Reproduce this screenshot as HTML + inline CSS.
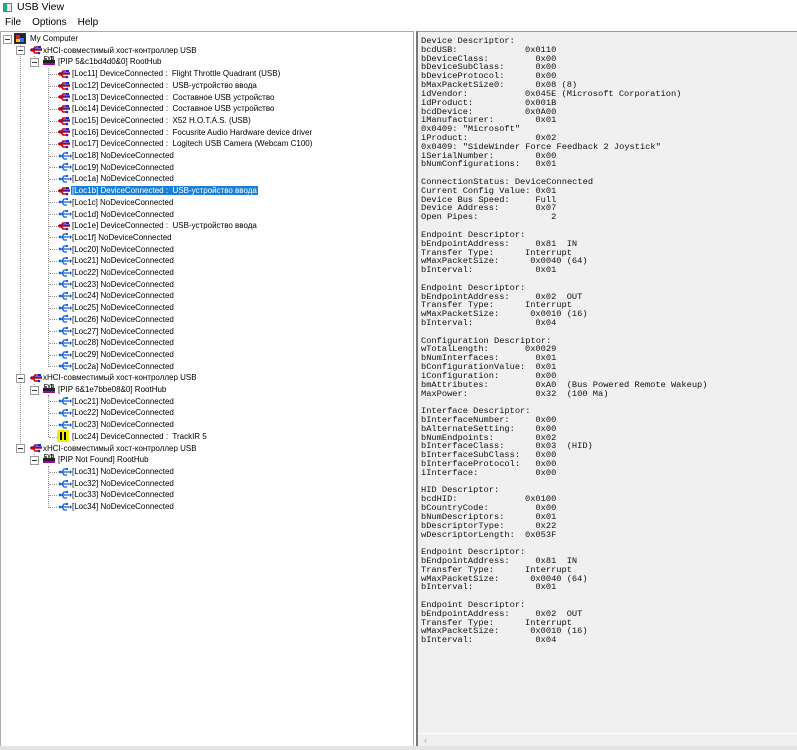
<!DOCTYPE html>
<html><head><meta charset="utf-8"><style>
*{margin:0;padding:0;box-sizing:border-box}
body{width:797px;height:750px;background:#fff;position:relative;overflow:hidden;font-family:"Liberation Sans","Noto Sans CJK SC",sans-serif;color:#000}
#title{position:absolute;left:17px;top:1px;font-size:10.5px}
#ticon{position:absolute;left:3px;top:3px;width:9px;height:9px;border:1px solid #777;background:linear-gradient(90deg,#2a8 0 40%,#eee 40%)}
#menu{position:absolute;top:17px;left:5px;font-size:10px}
#menu span{margin-right:11px}
#tree{position:absolute;left:0;top:31px;width:414px;height:716px;border:1px solid #aaa;background:#fff}
#right{position:absolute;left:416px;top:31px;width:381px;height:716px;border-left:2px solid #777;border-top:1px solid #999;background:#f0f0f0}
#bottom{position:absolute;left:0;top:746px;width:797px;height:4px;background:#e4e4e4}
.r{position:absolute;height:12px;line-height:12px;font-size:8px;white-space:nowrap}
.sel{background:#1a7fd9;color:#fff;padding:0 1px;margin-left:-1px}
.ic{position:absolute}
.ex{position:absolute;width:9px;height:9px;border:1px solid #999;background:#fff}
.ex:after{content:"";position:absolute;left:1px;top:3px;width:5px;height:1px;background:#333}
.vl{position:absolute;width:0;border-left:1px dotted #999}
.hl{position:absolute;height:0;border-top:1px dotted #999}
.t{position:absolute;font-family:"Liberation Mono",monospace;font-size:8.7px;line-height:8.82px;color:#111;white-space:pre}
#hs{position:absolute;left:0;bottom:0;width:379px;height:14px;border-top:1px solid #fff;background:#f0f0f0;font-size:9px;color:#999;padding-left:6px;line-height:13px}
</style></head><body>
<svg width="0" height="0" style="position:absolute"><defs>
<g id="uc"><path d="M0 4h12M3 4l2-3h3M3 4l2 3h3" stroke="#c00" stroke-width="1.6" fill="none"/><path d="M1 3h11" stroke="#22c" stroke-width="1.4"/><circle cx="2" cy="4" r="1.6" fill="#c00"/><rect x="8" y="0" width="3" height="2" fill="#22c"/><circle cx="9" cy="7" r="1.3" fill="#22c"/></g>
<g id="un"><path d="M1 4h11M4 4l2-3h3M4 4l2 3h3" stroke="#1560d6" stroke-width="1.3" fill="none"/><circle cx="2" cy="4" r="1.4" fill="#1560d6"/><path d="M12 2v4l2-2z" fill="#1560d6"/><rect x="8" y="0" width="2" height="2" fill="#1560d6"/></g>
<g id="hub"><rect x="0" y="5" width="12" height="4" fill="#222"/><rect x="0" y="8" width="12" height="2" fill="#a0a"/><text x="1" y="5" font-size="5" font-family="Liberation Sans" font-weight="bold">EVB</text></g>
</defs></svg>
<div id="ticon"></div><div id="title">USB View</div>
<div id="menu"><span>File</span><span>Options</span><span>Help</span></div>
<div id="tree"></div>
<div style="position:absolute;left:0;top:0">
<div class="vl" style="left:20px;top:45px;height:404px"></div>
<div class="vl" style="left:34px;top:56px;height:7px"></div>
<div class="vl" style="left:48px;top:68px;height:299px"></div>
<div class="vl" style="left:34px;top:384px;height:7px"></div>
<div class="vl" style="left:48px;top:395px;height:42px"></div>
<div class="vl" style="left:34px;top:454px;height:7px"></div>
<div class="vl" style="left:48px;top:466px;height:42px"></div>
<div class="ex" style="left:3px;top:35px"></div>
<svg class="ic" style="left:14px;top:33px" width="13" height="12"><rect x="0.5" y="0.5" width="11" height="10" fill="#223" stroke="#333"/><rect x="2" y="2" width="4" height="4" fill="#d22"/><rect x="6" y="5" width="4" height="4" fill="#27e"/><rect x="2" y="6" width="4" height="3" fill="#fc0"/></svg>
<div class="r" style="left:30px;top:33px">My Computer</div>
</div>
<div id="right">
<div class="t" style="left:3px;top:5px">Device Descriptor:
bcdUSB:
bDeviceClass:
bDeviceSubClass:
bDeviceProtocol:
bMaxPacketSize0:
idVendor:
idProduct:
bcdDevice:
iManufacturer:
0x0409: "Microsoft"
iProduct:
0x0409: "SideWinder Force Feedback 2 Joystick"
iSerialNumber:
bNumConfigurations:

ConnectionStatus: DeviceConnected
Current Config Value:
Device Bus Speed:
Device Address:
Open Pipes:

Endpoint Descriptor:
bEndpointAddress:
Transfer Type:
wMaxPacketSize:
bInterval:

Endpoint Descriptor:
bEndpointAddress:
Transfer Type:
wMaxPacketSize:
bInterval:

Configuration Descriptor:
wTotalLength:
bNumInterfaces:
bConfigurationValue:
iConfiguration:
bmAttributes:
MaxPower:

Interface Descriptor:
bInterfaceNumber:
bAlternateSetting:
bNumEndpoints:
bInterfaceClass:
bInterfaceSubClass:
bInterfaceProtocol:
iInterface:

HID Descriptor:
bcdHID:
bCountryCode:
bNumDescriptors:
bDescriptorType:
wDescriptorLength:

Endpoint Descriptor:
bEndpointAddress:
Transfer Type:
wMaxPacketSize:
bInterval:

Endpoint Descriptor:
bEndpointAddress:
Transfer Type:
wMaxPacketSize:
bInterval:</div>
<div class="t" style="left:107px;top:5px">
0x0110
  0x00
  0x00
  0x00
  0x08 (8)
0x045E (Microsoft Corporation)
0x001B
0x0A00
  0x01

  0x02

  0x00
  0x01


  0x01
  Full
  0x07
     2


  0x81  IN
Interrupt
 0x0040 (64)
  0x01


  0x02  OUT
Interrupt
 0x0010 (16)
  0x04


0x0029
  0x01
  0x01
  0x00
  0xA0  (Bus Powered Remote Wakeup)
  0x32  (100 Ma)


  0x00
  0x00
  0x02
  0x03  (HID)
  0x00
  0x00
  0x00


0x0100
  0x00
  0x01
  0x22
0x053F


  0x81  IN
Interrupt
 0x0040 (64)
  0x01


  0x02  OUT
Interrupt
 0x0010 (16)
  0x04</div>
<div id="hs">&#8249;</div>
</div>
<div id="bottom"></div>
<div style="position:absolute;left:0;top:0">
<div class="ex" style="left:16px;top:46px"></div><svg class="ic" style="left:30px;top:46px" width="14" height="9"><use href="#uc"/></svg><div class="r" style="left:43px;top:44.7px">xHCI-совместимый хост-контроллер USB</div>
<div class="ex" style="left:30px;top:58px"></div><svg class="ic" style="left:43px;top:55px" width="13" height="11"><use href="#hub"/></svg><div class="r" style="left:58px;top:56.4px">[PIP 5&amp;c1bd4d0&amp;0] RootHub</div>
<div class="ex" style="left:16px;top:374px"></div><svg class="ic" style="left:30px;top:374px" width="14" height="9"><use href="#uc"/></svg><div class="r" style="left:43px;top:372.3px">xHCI-совместимый хост-контроллер USB</div>
<div class="ex" style="left:30px;top:386px"></div><svg class="ic" style="left:43px;top:383px" width="13" height="11"><use href="#hub"/></svg><div class="r" style="left:58px;top:384px">[PIP 6&amp;1e7bbe08&amp;0] RootHub</div>
<div class="ex" style="left:16px;top:444px"></div><svg class="ic" style="left:30px;top:444px" width="14" height="9"><use href="#uc"/></svg><div class="r" style="left:43px;top:442.5px">xHCI-совместимый хост-контроллер USB</div>
<div class="ex" style="left:30px;top:456px"></div><svg class="ic" style="left:43px;top:453px" width="13" height="11"><use href="#hub"/></svg><div class="r" style="left:58px;top:454.2px">[PIP Not Found] RootHub</div>
</div>
<div style="position:absolute;left:0;top:0">
<div class="hl" style="left:49px;top:74px;width:8px"></div><svg class="ic" style="left:58px;top:70px" width="14" height="9"><use href="#uc"/></svg><div class="r" style="left:72px;top:68.1px">[Loc11] DeviceConnected :&nbsp; Flight Throttle Quadrant (USB)</div>
<div class="hl" style="left:49px;top:86px;width:8px"></div><svg class="ic" style="left:58px;top:82px" width="14" height="9"><use href="#uc"/></svg><div class="r" style="left:72px;top:79.8px">[Loc12] DeviceConnected :&nbsp; USB-устройство ввода</div>
<div class="hl" style="left:49px;top:97px;width:8px"></div><svg class="ic" style="left:58px;top:93px" width="14" height="9"><use href="#uc"/></svg><div class="r" style="left:72px;top:91.5px">[Loc13] DeviceConnected :&nbsp; Составное USB устройство</div>
<div class="hl" style="left:49px;top:109px;width:8px"></div><svg class="ic" style="left:58px;top:105px" width="14" height="9"><use href="#uc"/></svg><div class="r" style="left:72px;top:103.2px">[Loc14] DeviceConnected :&nbsp; Составное USB устройство</div>
<div class="hl" style="left:49px;top:121px;width:8px"></div><svg class="ic" style="left:58px;top:117px" width="14" height="9"><use href="#uc"/></svg><div class="r" style="left:72px;top:114.9px">[Loc15] DeviceConnected :&nbsp; X52 H.O.T.A.S. (USB)</div>
<div class="hl" style="left:49px;top:132px;width:8px"></div><svg class="ic" style="left:58px;top:128px" width="14" height="9"><use href="#uc"/></svg><div class="r" style="left:72px;top:126.6px">[Loc16] DeviceConnected :&nbsp; Focusrite Audio Hardware device driver</div>
<div class="hl" style="left:49px;top:144px;width:8px"></div><svg class="ic" style="left:58px;top:140px" width="14" height="9"><use href="#uc"/></svg><div class="r" style="left:72px;top:138.3px">[Loc17] DeviceConnected :&nbsp; Logitech USB Camera (Webcam C100)</div>
<div class="hl" style="left:49px;top:156px;width:8px"></div><svg class="ic" style="left:58px;top:152px" width="14" height="9"><use href="#un"/></svg><div class="r" style="left:72px;top:150px">[Loc18] NoDeviceConnected</div>
<div class="hl" style="left:49px;top:167px;width:8px"></div><svg class="ic" style="left:58px;top:163px" width="14" height="9"><use href="#un"/></svg><div class="r" style="left:72px;top:161.7px">[Loc19] NoDeviceConnected</div>
<div class="hl" style="left:49px;top:179px;width:8px"></div><svg class="ic" style="left:58px;top:175px" width="14" height="9"><use href="#un"/></svg><div class="r" style="left:72px;top:173.4px">[Loc1a] NoDeviceConnected</div>
<div class="hl" style="left:49px;top:191px;width:8px"></div><svg class="ic" style="left:58px;top:187px" width="14" height="9"><use href="#uc"/></svg><div class="r" style="left:72px;top:185.1px"><span class="sel">[Loc1b] DeviceConnected :&nbsp; USB-устройство ввода</span></div>
<div class="hl" style="left:49px;top:202px;width:8px"></div><svg class="ic" style="left:58px;top:198px" width="14" height="9"><use href="#un"/></svg><div class="r" style="left:72px;top:196.8px">[Loc1c] NoDeviceConnected</div>
<div class="hl" style="left:49px;top:214px;width:8px"></div><svg class="ic" style="left:58px;top:210px" width="14" height="9"><use href="#un"/></svg><div class="r" style="left:72px;top:208.5px">[Loc1d] NoDeviceConnected</div>
<div class="hl" style="left:49px;top:226px;width:8px"></div><svg class="ic" style="left:58px;top:222px" width="14" height="9"><use href="#uc"/></svg><div class="r" style="left:72px;top:220.2px">[Loc1e] DeviceConnected :&nbsp; USB-устройство ввода</div>
<div class="hl" style="left:49px;top:237px;width:8px"></div><svg class="ic" style="left:58px;top:233px" width="14" height="9"><use href="#un"/></svg><div class="r" style="left:72px;top:231.9px">[Loc1f] NoDeviceConnected</div>
<div class="hl" style="left:49px;top:249px;width:8px"></div><svg class="ic" style="left:58px;top:245px" width="14" height="9"><use href="#un"/></svg><div class="r" style="left:72px;top:243.6px">[Loc20] NoDeviceConnected</div>
<div class="hl" style="left:49px;top:261px;width:8px"></div><svg class="ic" style="left:58px;top:257px" width="14" height="9"><use href="#un"/></svg><div class="r" style="left:72px;top:255.3px">[Loc21] NoDeviceConnected</div>
<div class="hl" style="left:49px;top:273px;width:8px"></div><svg class="ic" style="left:58px;top:269px" width="14" height="9"><use href="#un"/></svg><div class="r" style="left:72px;top:267px">[Loc22] NoDeviceConnected</div>
<div class="hl" style="left:49px;top:284px;width:8px"></div><svg class="ic" style="left:58px;top:280px" width="14" height="9"><use href="#un"/></svg><div class="r" style="left:72px;top:278.7px">[Loc23] NoDeviceConnected</div>
<div class="hl" style="left:49px;top:296px;width:8px"></div><svg class="ic" style="left:58px;top:292px" width="14" height="9"><use href="#un"/></svg><div class="r" style="left:72px;top:290.4px">[Loc24] NoDeviceConnected</div>
<div class="hl" style="left:49px;top:308px;width:8px"></div><svg class="ic" style="left:58px;top:304px" width="14" height="9"><use href="#un"/></svg><div class="r" style="left:72px;top:302.1px">[Loc25] NoDeviceConnected</div>
<div class="hl" style="left:49px;top:319px;width:8px"></div><svg class="ic" style="left:58px;top:315px" width="14" height="9"><use href="#un"/></svg><div class="r" style="left:72px;top:313.8px">[Loc26] NoDeviceConnected</div>
<div class="hl" style="left:49px;top:331px;width:8px"></div><svg class="ic" style="left:58px;top:327px" width="14" height="9"><use href="#un"/></svg><div class="r" style="left:72px;top:325.5px">[Loc27] NoDeviceConnected</div>
<div class="hl" style="left:49px;top:343px;width:8px"></div><svg class="ic" style="left:58px;top:339px" width="14" height="9"><use href="#un"/></svg><div class="r" style="left:72px;top:337.2px">[Loc28] NoDeviceConnected</div>
<div class="hl" style="left:49px;top:355px;width:8px"></div><svg class="ic" style="left:58px;top:351px" width="14" height="9"><use href="#un"/></svg><div class="r" style="left:72px;top:348.9px">[Loc29] NoDeviceConnected</div>
<div class="hl" style="left:49px;top:366px;width:8px"></div><svg class="ic" style="left:58px;top:362px" width="14" height="9"><use href="#un"/></svg><div class="r" style="left:72px;top:360.6px">[Loc2a] NoDeviceConnected</div>
<div class="hl" style="left:49px;top:401px;width:8px"></div><svg class="ic" style="left:58px;top:397px" width="14" height="9"><use href="#un"/></svg><div class="r" style="left:72px;top:395.7px">[Loc21] NoDeviceConnected</div>
<div class="hl" style="left:49px;top:413px;width:8px"></div><svg class="ic" style="left:58px;top:409px" width="14" height="9"><use href="#un"/></svg><div class="r" style="left:72px;top:407.4px">[Loc22] NoDeviceConnected</div>
<div class="hl" style="left:49px;top:425px;width:8px"></div><svg class="ic" style="left:58px;top:421px" width="14" height="9"><use href="#un"/></svg><div class="r" style="left:72px;top:419.1px">[Loc23] NoDeviceConnected</div>
<div class="hl" style="left:49px;top:437px;width:8px"></div><svg class="ic" style="left:57px;top:430px" width="12" height="12"><rect x="0" y="0" width="12" height="12" rx="2" fill="#ee0"/><rect x="3" y="2" width="2" height="8" fill="#000"/><rect x="7" y="2" width="2" height="8" fill="#000"/></svg><div class="r" style="left:72px;top:430.8px">[Loc24] DeviceConnected :&nbsp; TrackIR 5</div>
<div class="hl" style="left:49px;top:472px;width:8px"></div><svg class="ic" style="left:58px;top:468px" width="14" height="9"><use href="#un"/></svg><div class="r" style="left:72px;top:465.9px">[Loc31] NoDeviceConnected</div>
<div class="hl" style="left:49px;top:484px;width:8px"></div><svg class="ic" style="left:58px;top:480px" width="14" height="9"><use href="#un"/></svg><div class="r" style="left:72px;top:477.6px">[Loc32] NoDeviceConnected</div>
<div class="hl" style="left:49px;top:495px;width:8px"></div><svg class="ic" style="left:58px;top:491px" width="14" height="9"><use href="#un"/></svg><div class="r" style="left:72px;top:489.3px">[Loc33] NoDeviceConnected</div>
<div class="hl" style="left:49px;top:507px;width:8px"></div><svg class="ic" style="left:58px;top:503px" width="14" height="9"><use href="#un"/></svg><div class="r" style="left:72px;top:501px">[Loc34] NoDeviceConnected</div>
</div>
</body></html>
